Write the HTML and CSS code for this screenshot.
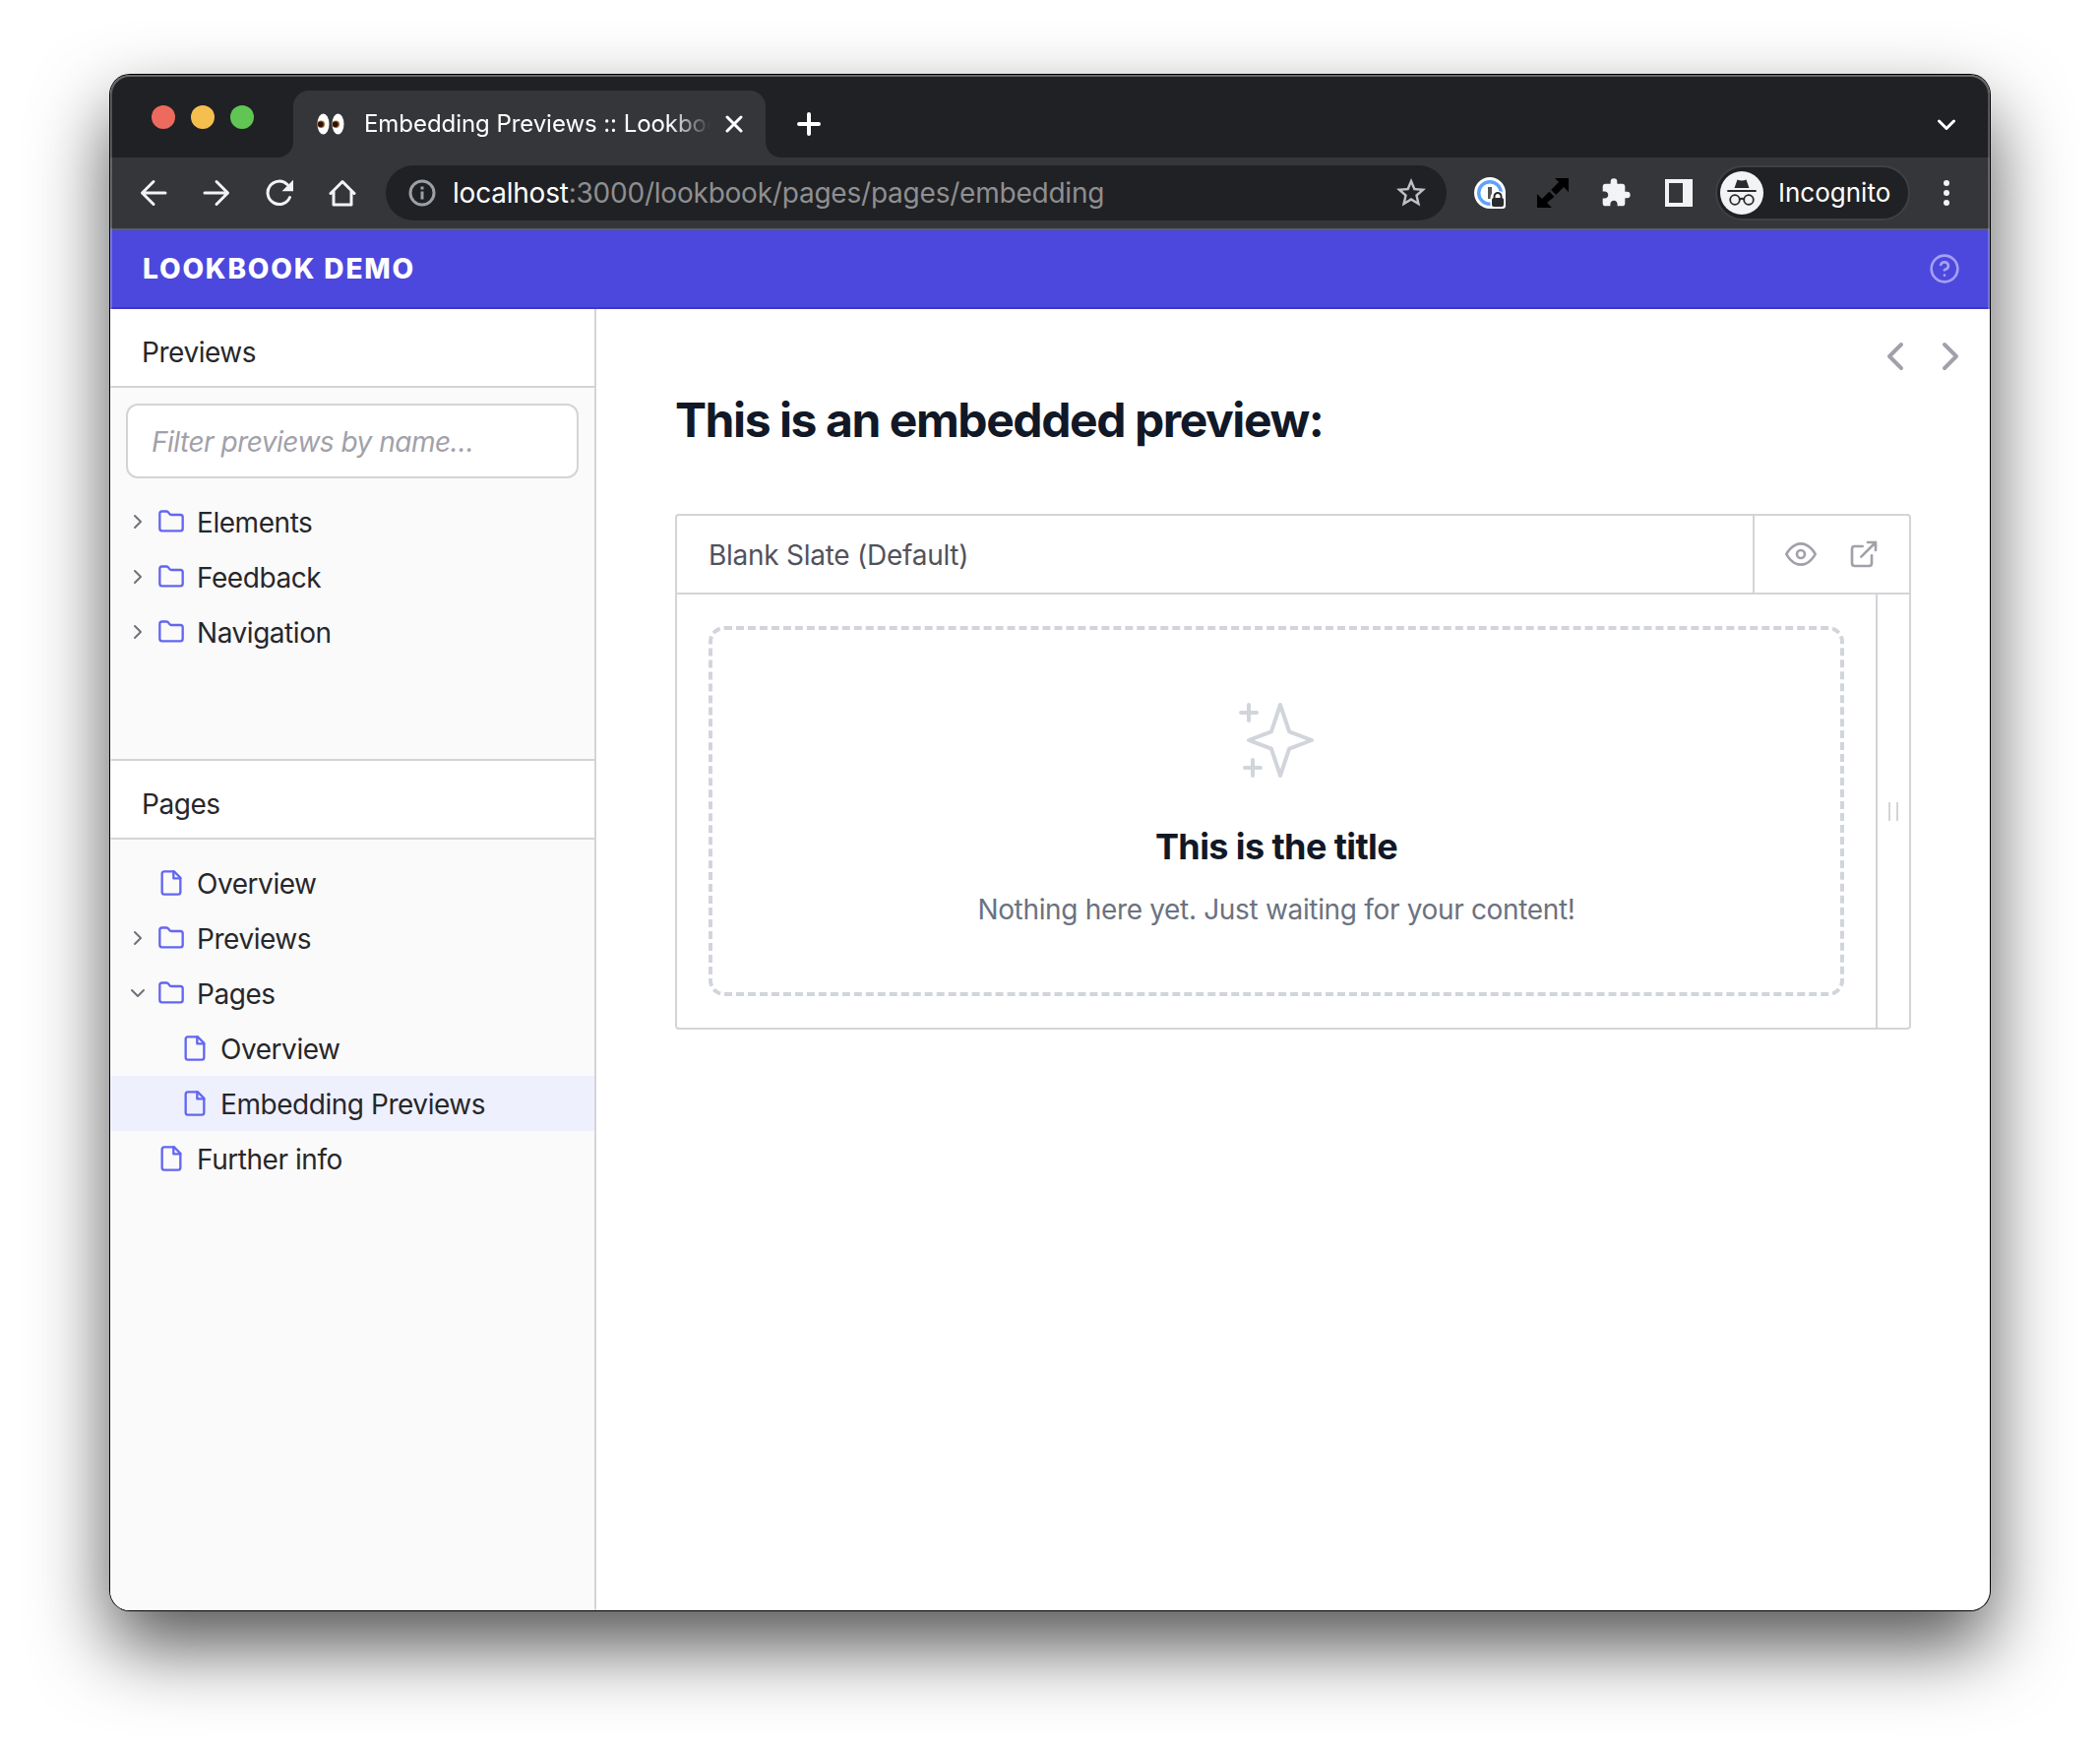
FILE: index.html
```html
<!DOCTYPE html>
<html lang="en">
<head>
<meta charset="utf-8">
<title>Embedding Previews :: Lookbook</title>
<link rel="stylesheet" href="styles.css">
</head>
<body>
<svg class="sprite" aria-hidden="true">
  <symbol id="folder" viewBox="0 0 24 24"><path d="M4 20h16a2 2 0 0 0 2-2V8a2 2 0 0 0-2-2h-7.93a2 2 0 0 1-1.66-.9l-.82-1.2A2 2 0 0 0 7.93 3H4a2 2 0 0 0-2 2v13c0 1.1.9 2 2 2Z"/></symbol>
  <symbol id="file" viewBox="0 0 24 24"><path d="M14.5 2H6a2 2 0 0 0-2 2v16a2 2 0 0 0 2 2h12a2 2 0 0 0 2-2V7.5L14.5 2z"/><path d="M14 2v6h6"/></symbol>
  <symbol id="right" viewBox="0 0 24 24"><path d="m9 18 6-6-6-6"/></symbol>
  <symbol id="left" viewBox="0 0 24 24"><path d="m15 18-6-6 6-6"/></symbol>
  <symbol id="down" viewBox="0 0 24 24"><path d="m6 9 6 6 6-6"/></symbol>
</svg>
<div class="window">
  <div class="tabstrip">
    <div class="lights"><i class="red"></i><i class="yellow"></i><i class="green"></i></div>
    <div class="tab">
      <svg class="eyes" viewBox="0 0 28 22"><g fill="#fff"><ellipse cx="6.5" cy="11" rx="6" ry="10.5"/><ellipse cx="21.5" cy="11" rx="6" ry="10.5"/></g><g fill="#a8662a"><circle cx="4.3" cy="11.3" r="3.7"/><circle cx="19.3" cy="11.3" r="3.700"/></g><g fill="#2a1308"><circle cx="3.8" cy="11.3" r="2.800"/><circle cx="18.8" cy="11.3" r="2.800"/></g></svg>
      <span class="tab-title">Embedding Previews :: Lookbook</span>
      <svg class="close" viewBox="0 0 18 18"><path d="M2 2l14 14M16 2L2 16"/></svg>
    </div>
    <svg class="plus" viewBox="0 0 24 24"><path d="M12 2v20M2 12h20"/></svg>
    <svg class="tabs-menu" viewBox="0 0 18 12"><path d="M1.500 2l7.500 7.500L16.500 2"/></svg>
  </div>
  <div class="toolbar">
    <svg class="tool" viewBox="0 0 28 28"><path d="M26 14H3M14 2.500L2.500 14 14 25.500"/></svg>
    <svg class="tool" viewBox="0 0 28 28"><path d="M2 14h23M14 2.500L25.500 14 14 25.500"/></svg>
    <svg class="tool" viewBox="0 0 28 28"><path d="M24.500 18.500A11.700 11.700 0 1 1 22 5.500"/><path class="solid" d="M28 .8v11.500H16.500z"/></svg>
    <svg class="tool home" viewBox="0 0 28 28"><path d="M2 14.500L14 2.500l12 12M5 12.500V26h18V12.500"/></svg>
    <div class="omnibox">
      <svg class="info" viewBox="0 0 28 28"><circle cx="14" cy="14" r="12"/><path d="M14 12.500v8M14 7.500v3"/></svg>
      <span class="url"><b>localhost</b>:3000/lookbook/pages/pages/embedding</span>
      <svg class="star" viewBox="0 0 24 24"><path d="M22 9.240l-7.190-.62L12 2 9.190 8.630 2 9.240l5.460 4.730L5.820 21 12 17.270 18.180 21l-1.630-7.030L22 9.240zM12 15.400l-3.760 2.270 1-4.280-3.320-2.880 4.380-.38L12 6.100l1.710 4.040 4.380.38-3.320 2.880 1 4.280L12 15.400z"/></svg>
    </div>
    <svg class="ext" viewBox="0 0 32 32"><circle cx="16" cy="16" r="16" fill="#fff"/><circle cx="16" cy="16" r="11.300" fill="none" stroke="#60a2f8" stroke-width="3.400"/><path fill="#555" d="M14 10h4v12h-4z"/><path fill="#fff" d="M16.500 22c0-5 3-8 7.500-8 5 0 8 3 8 7v8q0 3-3 3H16.500z"/><rect x="18" y="21" width="12" height="9" rx="2" fill="#292a2d"/><path d="M20.500 22v-2.500a3.500 3.500 0 0 1 7 0V22" fill="none" stroke="#292a2d" stroke-width="2"/></svg>
    <svg class="ext" viewBox="0 0 32 32"><path fill="#000" d="M18 1h14v14l-5-5-12 12-5-5L22 5zM0 17l5 5 6-6 5 5-6 5 5 5H0z"/><path d="M12.500 13l7 7" stroke="#35363a" stroke-width="2.500"/></svg>
    <svg class="ext" viewBox="0 0 24 24"><path fill="#f1f3f4" d="M20.500 11H19V7c0-1.100-.9-2-2-2h-4V3.500a2.500 2.500 0 0 0-5 0V5H4c-1.100 0-1.990.9-1.990 2v3.800H3.500c1.490 0 2.700 1.210 2.700 2.700s-1.210 2.700-2.700 2.700H2V20c0 1.100.9 2 2 2h3.800v-1.500c0-1.490 1.210-2.700 2.700-2.700s2.700 1.210 2.700 2.700V22H17c1.100 0 2-.9 2-2v-4h1.500a2.500 2.500 0 0 0 0-5z"/></svg>
    <svg class="ext" viewBox="0 0 32 32"><path fill="#f1f3f4" fill-rule="evenodd" d="M2 2h28v28H2zM6 6v20h14V6z"/></svg>
    <div class="incognito">
      <svg class="spy" viewBox="0 0 44 44"><circle cx="22" cy="22" r="22" fill="#f1f3f4"/><path fill="#292a2d" d="M17.500 8.500q4.500 1.800 9 0l3 8.500h-15z"/><path d="M8 20h28" stroke="#292a2d" stroke-width="1.800"/><g fill="none" stroke="#292a2d" stroke-width="1.800"><circle cx="15" cy="29" r="4.800"/><circle cx="29" cy="29" r="4.800"/><path d="M19.800 28.500q2.200-1.500 4.400 0"/></g></svg>
      <span>Incognito</span>
    </div>
    <svg class="dots" viewBox="0 0 6 26"><circle cx="3" cy="3" r="3"/><circle cx="3" cy="13" r="3"/><circle cx="3" cy="23" r="3"/></svg>
  </div>
  <header class="brand">
    <h1>LOOKBOOK DEMO</h1>
    <svg class="icon" viewBox="0 0 24 24"><circle cx="12" cy="12" r="10"/><path d="M9.090 9a3 3 0 0 1 5.830 1c0 2-3 3-3 3M12 17h.01"/></svg>
  </header>
  <div class="app">
    <aside class="sidebar">
      <section class="panel previews">
        <h2>Previews</h2>
        <div class="filter">Filter previews by name…</div>
        <ul>
          <li><svg class="arrow"><use href="#right"/></svg><svg class="glyph"><use href="#folder"/></svg><span>Elements</span></li>
          <li><svg class="arrow"><use href="#right"/></svg><svg class="glyph"><use href="#folder"/></svg><span>Feedback</span></li>
          <li><svg class="arrow"><use href="#right"/></svg><svg class="glyph"><use href="#folder"/></svg><span>Navigation</span></li>
        </ul>
      </section>
      <section class="panel pages">
        <h2>Pages</h2>
        <ul>
          <li><i class="arrow"></i><svg class="glyph"><use href="#file"/></svg><span>Overview</span></li>
          <li><svg class="arrow"><use href="#right"/></svg><svg class="glyph"><use href="#folder"/></svg><span>Previews</span></li>
          <li><svg class="arrow"><use href="#down"/></svg><svg class="glyph"><use href="#folder"/></svg><span>Pages</span></li>
          <li class="nested"><i class="arrow"></i><svg class="glyph"><use href="#file"/></svg><span>Overview</span></li>
          <li class="nested active"><i class="arrow"></i><svg class="glyph"><use href="#file"/></svg><span>Embedding Previews</span></li>
          <li><i class="arrow"></i><svg class="glyph"><use href="#file"/></svg><span>Further info</span></li>
        </ul>
      </section>
    </aside>
    <main>
      <nav class="pager"><svg><use href="#left"/></svg><svg><use href="#right"/></svg></nav>
      <h2 class="headline">This is an embedded preview:</h2>
      <div class="embed">
        <div class="embed-head">
          <span class="embed-name">Blank Slate (Default)</span>
          <div class="embed-tools">
            <svg class="icon" viewBox="0 0 24 24"><path d="M1 12s4-8 11-8 11 8 11 8-4 8-11 8-11-8-11-8z"/><circle cx="12" cy="12" r="3"/></svg>
            <svg class="icon" viewBox="0 0 24 24"><path d="M18 13v6a2 2 0 0 1-2 2H5a2 2 0 0 1-2-2V8a2 2 0 0 1 2-2h6M15 3h6v6M10 14L21 3"/></svg>
          </div>
        </div>
        <div class="embed-body">
          <div class="stage">
            <div class="blank">
              <svg class="sparkles" viewBox="0 0 24 24"><path d="M5 3v4M3 5h4M6 17v4m-2-2h4m5-16l2.286 6.857L21 12l-5.714 2.143L13 21l-2.286-6.857L5 12l5.714-2.143L13 3z"/></svg>
              <h3>This is the title</h3>
              <p>Nothing here yet. Just waiting for your content!</p>
            </div>
          </div>
          <div class="handle"><i></i><i></i></div>
        </div>
      </div>
    </main>
  </div>
</div>
</body>
</html>
```
FILE: styles.css
```css
* { box-sizing: border-box; margin: 0; padding: 0; }
body {
  width: 2134px;
  height: 1784px;
  overflow: hidden;
  padding: 76px 112px 148px;
  background: #fff;
  font: 400 28px/40px Inter, "Liberation Sans", sans-serif;
  color: #27272a;
}
svg { display: block; flex: none; fill: none; stroke-linecap: round; stroke-linejoin: round; }
.sprite { position: absolute; width: 0; height: 0; }
ul { list-style: none; }

.window {
  position: relative;
  display: flex;
  flex-direction: column;
  width: 1910px;
  height: 1560px;
  border-radius: 20px;
  overflow: hidden;
  background: #fff;
  box-shadow: 0 0 0 1px #000, 0 36px 78px rgba(0, 0, 0, .68);
}
.window::after {
  content: "";
  position: absolute;
  inset: 0;
  border-radius: 20px;
  box-shadow: inset 0 0 0 2px rgba(255, 255, 255, .2), inset 0 1px 0 1px rgba(255, 255, 255, .15);
}

.tabstrip { display: flex; height: 84px; background: #202124; }
.lights { display: flex; gap: 16px; width: 186px; padding: 31px 0 0 42px; }
.lights i { width: 24px; height: 24px; border-radius: 50%; }
.red { background: #ed6a5e; }
.yellow { background: #f5bf4f; }
.green { background: #61c554; }
.tab {
  position: relative;
  display: flex;
  align-items: center;
  width: 480px;
  height: 68px;
  margin-top: 16px;
  padding-left: 24px;
  border-radius: 16px 16px 0 0;
  background: #35363a;
}
.tab::before, .tab::after {
  content: "";
  position: absolute;
  bottom: 0;
  width: 16px;
  height: 16px;
}
.tab::before { left: -16px; background: radial-gradient(circle at 0 0, transparent 15.500px, #35363a 16.500px); }
.tab::after { right: -16px; background: radial-gradient(circle at 100% 0, transparent 15.500px, #35363a 16.500px); }
.eyes { width: 28px; height: 22px; margin-right: 20px; }
.tab-title {
  width: 352px;
  overflow: hidden;
  white-space: nowrap;
  font-size: 24px;
  line-height: 34px;
  letter-spacing: -.060px;
  color: #fff;
  -webkit-mask-image: linear-gradient(90deg, #000 310px, transparent 352px);
  mask-image: linear-gradient(90deg, #000 310px, transparent 352px);
}
.close { width: 18px; height: 18px; margin-left: 15px; stroke: #fff; stroke-width: 3; }
.plus { width: 24px; height: 24px; margin: 38px auto 0 32px; stroke: #fff; stroke-width: 4; }
.tabs-menu { width: 18px; height: 12px; margin: 45px 35px 0 0; stroke: #fff; stroke-width: 3; }

.toolbar {
  display: flex;
  align-items: center;
  height: 74px;
  border-bottom: 2px solid #5c5d62;
  background: #35363a;
  padding-left: 30px;
}
.tool { width: 28px; height: 28px; margin-right: 36px; stroke: #f1f3f4; stroke-width: 3; }
.tool .solid { fill: #f1f3f4; stroke: none; }
.home { margin-right: 30px; }
.omnibox {
  display: flex;
  align-items: center;
  width: 1078px;
  height: 56px;
  margin-right: 28px;
  padding: 0 18px 0 23px;
  border-radius: 28px;
  background: #202124;
}
.info { width: 28px; height: 28px; margin-right: 17px; stroke: #9aa0a6; stroke-width: 3; stroke-linecap: butt; }
.url { flex: 1; color: #8e8f92; white-space: nowrap; letter-spacing: -.220px; }
.url b { font-weight: 400; color: #fff; }
.star { width: 36px; height: 36px; fill: #bdc1c6; }
.ext { width: 32px; height: 32px; margin-right: 32px; }
.ext path { stroke-linecap: butt; }
.incognito {
  display: flex;
  align-items: center;
  width: 198px;
  height: 56px;
  margin-left: -11px;
  padding-left: 3px;
  border: 2px solid #3f4045;
  border-radius: 28px;
  background: #202124;
  font-size: 26px;
  color: #fff;
}
.spy { width: 44px; height: 44px; margin-right: 15px; }
.dots { width: 6px; height: 26px; margin-left: 34px; fill: #f1f3f4; }

.brand {
  display: flex;
  align-items: center;
  justify-content: space-between;
  height: 80px;
  padding: 0 30px 0 33px;
  border-bottom: 2px solid #4036c4;
  background: #4c48dd;
}
.brand h1 { font-size: 28px; font-weight: 850; letter-spacing: 1.850px; color: #fff; }
.icon { width: 32px; height: 32px; stroke: #a5a0f2; stroke-width: 2; }

.app { display: flex; flex: 1; min-height: 0; }
.sidebar {
  display: flex;
  flex-direction: column;
  width: 494px;
  border-right: 2px solid #d4d4d8;
  background: #fafafa;
  letter-spacing: -.450px;
}
.previews { height: 457px; }
.panel h2 {
  height: 80px;
  padding: 24px 32px 0;
  border-bottom: 2px solid #d4d4d8;
  background: #fff;
  font-size: 28px;
  font-weight: 400;
}
.pages h2 { height: 82px; border-top: 2px solid #d4d4d8; }
.filter {
  height: 76px;
  margin: 16px 16px 0;
  padding: 17px 24px 0;
  border: 2px solid #d4d4d8;
  border-radius: 12px;
  background: #fff;
  color: #a1a1aa;
  font-style: italic;
  letter-spacing: -.500px;
}
.panel ul { padding-top: 16px; }
.panel li { display: flex; align-items: center; height: 56px; padding-left: 16px; }
.panel li span { padding-top: 2px; }
.panel li.nested { padding-left: 40px; }
.panel li.active { background: #eef0fe; }
.arrow { width: 24px; height: 24px; margin-right: 8px; stroke: #71717a; stroke-width: 2; }
.glyph { width: 28px; height: 28px; margin-right: 12px; stroke: #6366f1; stroke-width: 2; }

main { display: flex; flex: 1; flex-direction: column; padding: 24px 80px 0; }
.pager { display: flex; gap: 8px; align-self: flex-end; margin-right: -64px; }
.pager svg { width: 48px; height: 48px; stroke: #a1a1aa; stroke-width: 2; }
.headline { margin-top: 11px; font-size: 48px; line-height: 60px; font-weight: 700; letter-spacing: -1.430px; color: #111827; }
.embed { height: 524px; margin-top: 65px; border: 2px solid #d4d4d8; border-radius: 4px; }
.embed-head { display: flex; height: 80px; border-bottom: 2px solid #d4d4d8; }
.embed-name { flex: 1; padding: 20px 32px 0; color: #52525b; letter-spacing: -.260px; }
.embed-tools { display: flex; gap: 32px; width: 159px; padding: 23px 0 0 31px; border-left: 2px solid #d4d4d8; }
.embed-tools .icon { stroke: #a1a1aa; }
.embed-body { display: flex; height: 440px; }
.stage { flex: 1; padding: 32px; }
.blank {
  display: flex;
  flex-direction: column;
  align-items: center;
  height: 376px;
  padding-top: 64px;
  border: 4px dashed #d1d5db;
  border-radius: 16px;
}
.sparkles { width: 96px; height: 96px; stroke: #d1d5db; stroke-width: 1; }
.blank h3 { margin-top: 38px; font-size: 36px; line-height: 44px; font-weight: 700; letter-spacing: -.600px; color: #111827; }
.blank p { margin-top: 22px; color: #6b7280; letter-spacing: -.330px; }
.handle { display: flex; align-items: center; justify-content: center; gap: 6px; width: 34px; border-left: 2px solid #d4d4d8; }
.handle i { width: 2px; height: 19px; background: #d4d4d8; }
```
